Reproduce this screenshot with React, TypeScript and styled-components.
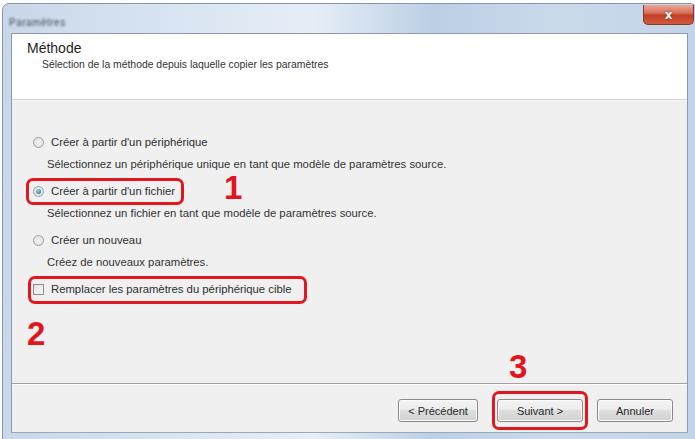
import React from "react";
import styled, { createGlobalStyle } from "styled-components";

const Global = createGlobalStyle`
  html, body { margin: 0; padding: 0; background: #ffffff; }
  body { width: 695px; height: 439px; overflow: hidden; font-family: "Liberation Sans", Arial, sans-serif; }
  #root { width: 695px; height: 439px; overflow: hidden; }
`;

const Window = styled.div`
  margin: 3px 0 0 2px;
  width: 695px;
  height: 440px;
  box-sizing: border-box;
  border: 1px solid #8394ab;
  border-radius: 7px 7px 0 0;
  padding: 0 8px 0 8px;
  background: linear-gradient(90deg, #c8d7e9 0%, #d9e5f2 25%, #e6eef7 45%, #bccfe5 62%, #cbdaeb 80%, #c3d4e8 100%);
  display: flex;
  flex-direction: column;
`;

const TitleBar = styled.div`
  height: 29px;
  flex: none;
  display: flex;
  align-items: flex-start;
  justify-content: space-between;
  margin-right: -6px;
`;

const Title = styled.span`
  margin: 13px 0 0 -2px;
  font-size: 10px;
  color: #3f4854;
  filter: blur(1.3px);
  letter-spacing: 0.5px;
`;

const CloseButton = styled.div`
  margin-top: 1px;
  width: 51px;
  height: 20px;
  box-sizing: border-box;
  border: 1px solid #83392b;
  border-top: none;
  border-radius: 0 0 5px 5px;
  background: linear-gradient(180deg, #eaa795 0%, #d9735c 40%, #c33f27 55%, #d25a3e 100%);
  display: flex;
  align-items: center;
  justify-content: center;
  color: #fff;
  font-family: "DejaVu Sans", sans-serif;
  font-weight: bold;
  font-size: 12px;
  text-shadow: 0 0 2px #6a1a0a;
`;

const Client = styled.div`
  height: 400px;
  box-sizing: border-box;
  border: 1px solid #8a99ad;
  border-bottom-color: #9aa8ba;
  background: #f0f0f0;
  display: flex;
  flex-direction: column;
  position: relative;
  color: #2b2b2b;
`;

const Header = styled.div`
  height: 66px;
  flex: none;
  box-sizing: border-box;
  background: #ffffff;
  border-bottom: 1px solid #d3d3d3;
  padding: 6px 0 0 15px;
`;

const HeaderTitle = styled.div`
  font-size: 14px;
  line-height: 17px;
  color: #1e1e1e;
`;

const HeaderSub = styled.div`
  margin: 1px 0 0 15px;
  font-size: 10.4px;
  line-height: 14px;
  color: #333;
`;

const Body = styled.div`
  flex: 1;
  box-sizing: border-box;
  padding: 33px 0 0 21px;
  display: flex;
  flex-direction: column;
  border-top: 1px solid #fafafa;
  position: relative;
`;

const Option = styled.div`
  display: flex;
  flex-direction: column;
  align-items: flex-start;
  & + & { margin-top: 11px; }
`;

const Row = styled.div`
  height: 16px;
  display: inline-flex;
  align-items: center;
  font-size: 11.3px;
  color: #2e2e2e;
`;

const Radio = styled.span<{ $checked?: boolean }>`
  width: 11px;
  height: 11px;
  box-sizing: border-box;
  border-radius: 50%;
  border: 1px solid #9aa0a6;
  background: radial-gradient(circle at 50% 50%, #f4f4f4 0%, #dcdcdc 100%);
  margin-right: 7px;
  display: flex;
  align-items: center;
  justify-content: center;
  &::after {
    content: "";
    display: ${(p) => (p.$checked ? "block" : "none")};
    width: 5px;
    height: 5px;
    border-radius: 50%;
    background: radial-gradient(circle at 40% 35%, #9ad6ee 0%, #2a7d9e 80%);
  }
`;

const Check = styled.span`
  width: 11px;
  height: 11px;
  box-sizing: border-box;
  border: 1px solid #8f8f8f;
  background: linear-gradient(135deg, #e2e2e2 0%, #fafafa 100%);
  margin-right: 7px;
`;

const Desc = styled.div`
  margin: 6px 0 0 14px;
  height: 16px;
  line-height: 16px;
  font-size: 11.3px;
  color: #333;
`;

const Highlight = styled.div<{ $pad: string; $margin: string }>`
  display: inline-flex;
  border: 3px solid #e0171f;
  border-radius: 7px;
  padding: ${(p) => p.$pad};
  margin: ${(p) => p.$margin};
`;

const Marker = styled.span<{ $x: number; $y: number }>`
  position: absolute;
  left: ${(p) => p.$x}px;
  top: ${(p) => p.$y}px;
  font-family: "Liberation Sans", Arial, sans-serif;
  font-weight: bold;
  font-size: 33px;
  line-height: 33px;
  color: #e3141c;
`;

const Footer = styled.div`
  height: 49px;
  flex: none;
  box-sizing: border-box;
  border-top: 1px solid #a3a3a3;
  box-shadow: inset 0 1px 0 #ffffff;
  padding: 15px 14px 0 0;
  display: flex;
  justify-content: flex-end;
  align-items: flex-start;
  position: relative;
`;

const Button = styled.div<{ $w: number; $gap?: number }>`
  width: ${(p) => p.$w}px;
  height: 23px;
  box-sizing: border-box;
  margin-left: ${(p) => p.$gap ?? 0}px;
  border: 1px solid #8a8a8a;
  border-radius: 3px;
  background: linear-gradient(180deg, #f4f4f4 0%, #ececec 45%, #dedede 50%, #d2d2d2 100%);
  box-shadow: inset 0 0 0 1px #fbfbfb;
  display: flex;
  align-items: center;
  justify-content: center;
  font-size: 11px;
  color: #2a2a2a;
`;

const ButtonHighlight = styled.div`
  margin: -8px 0 0 14px;
  padding: 5px 2px;
  border: 3px solid #e0171f;
  border-radius: 7px;
  display: flex;
`;

export default function App() {
  return (
    <>
      <Global />
      <Window>
        <TitleBar>
          <Title>Paramètres</Title>
          <CloseButton>x</CloseButton>
        </TitleBar>
        <Client>
          <Header>
            <HeaderTitle>Méthode</HeaderTitle>
            <HeaderSub>Sélection de la méthode depuis laquelle copier les paramètres</HeaderSub>
          </Header>
          <Body>
            <Option>
              <Row>
                <Radio />
                Créer à partir d'un périphérique
              </Row>
              <Desc>Sélectionnez un périphérique unique en tant que modèle de paramètres source.</Desc>
            </Option>
            <Option>
              <Highlight $pad="2px 6px 3px 4px" $margin="-5px 0 -6px -7px">
                <Row>
                  <Radio $checked />
                  Créer à partir d'un fichier
                </Row>
              </Highlight>
              <Desc>Sélectionnez un fichier en tant que modèle de paramètres source.</Desc>
            </Option>
            <Option>
              <Row>
                <Radio />
                Créer un nouveau
              </Row>
              <Desc>Créez de nouveaux paramètres.</Desc>
            </Option>
            <Option>
              <Highlight $pad="2px 12px 4px 2px" $margin="-5px 0 -7px -5px">
                <Row>
                  <Check />
                  Remplacer les paramètres du périphérique cible
                </Row>
              </Highlight>
            </Option>
            <Marker $x={212} $y={70}>1</Marker>
            <Marker $x={15} $y={216}>2</Marker>
          </Body>
          <Footer>
            <Marker $x={497} $y={-34}>3</Marker>
            <Button $w={80}>&lt; Précédent</Button>
            <ButtonHighlight>
              <Button $w={86}>Suivant &gt;</Button>
            </ButtonHighlight>
            <Button $w={76} $gap={9}>Annuler</Button>
          </Footer>
        </Client>
      </Window>
    </>
  );
}
